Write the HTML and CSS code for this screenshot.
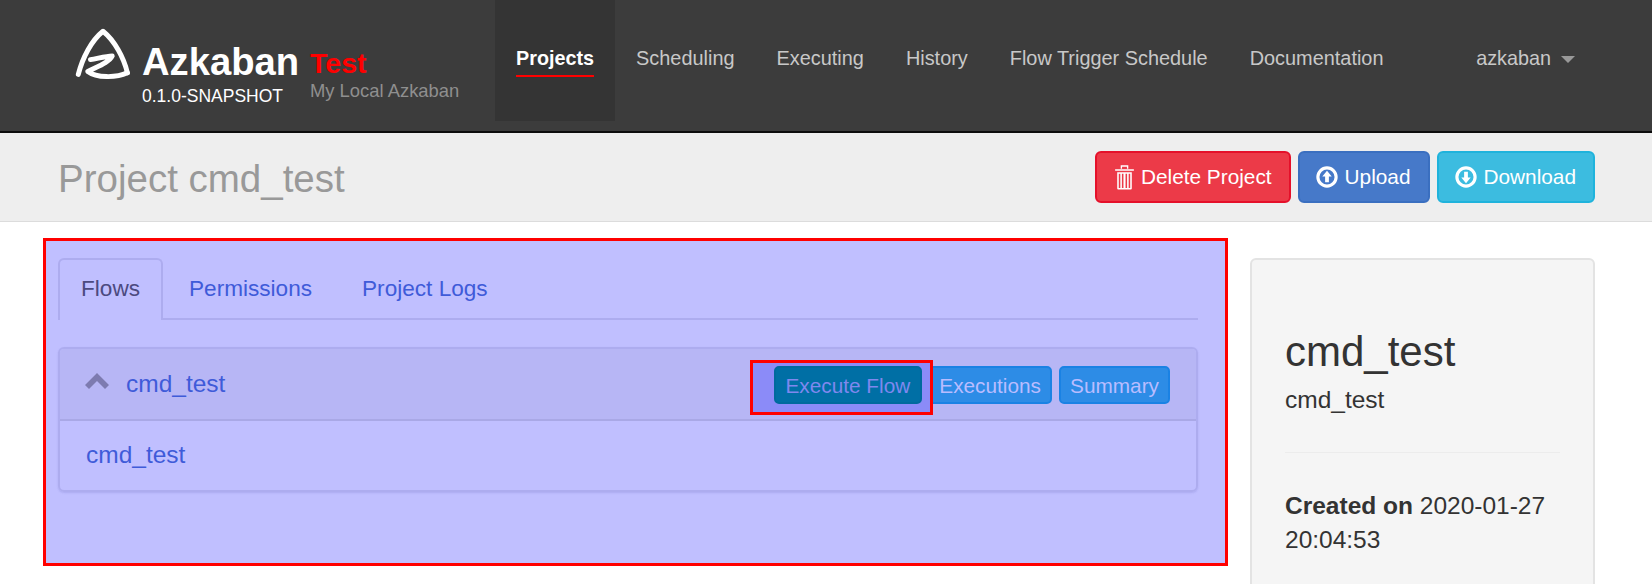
FILE: index.html
```html
<!DOCTYPE html>
<html lang="en">
<head>
<meta charset="utf-8">
<title>Azkaban - Project cmd_test</title>
<link rel="stylesheet" href="styles.css">
</head>
<body>
<div class="page">
  <nav class="navbar">
    <svg class="logo" viewBox="45 40 170 170" aria-hidden="true">
      <defs><filter id="soft" x="-10%" y="-10%" width="120%" height="120%"><feGaussianBlur stdDeviation="2.400"/></filter></defs>
      <g class="logo-strokes" filter="url(#soft)">
        <path d="M55 181C68 130 95 78 130 50C165 78 193 130 204 176"/>
        <path d="M92 136C112 133 138 126 158 125C148 146 110 158 84 172C110 192 170 192 204 176"/>
      </g>
    </svg>
    <div class="brand">
      <div class="brand-name">Azkaban</div>
      <div class="brand-version">0.1.0-SNAPSHOT</div>
    </div>
    <div class="env">
      <div class="env-name">Test</div>
      <div class="env-desc">My Local Azkaban</div>
    </div>
    <ul class="menu">
      <li class="menu-item active"><a href="#"><span>Projects</span></a></li>
      <li class="menu-item"><a href="#"><span>Scheduling</span></a></li>
      <li class="menu-item"><a href="#"><span>Executing</span></a></li>
      <li class="menu-item"><a href="#"><span>History</span></a></li>
      <li class="menu-item"><a href="#"><span>Flow Trigger Schedule</span></a></li>
      <li class="menu-item"><a href="#"><span>Documentation</span></a></li>
    </ul>
    <div class="user">azkaban<i class="caret"></i></div>
  </nav>

  <header class="page-header">
    <h1>Project cmd_test</h1>
    <div class="actions">
      <a class="btn btn-danger" href="#">
        <svg class="ico-trash" viewBox="0 0 18 24" aria-hidden="true">
          <path d="M0 4h18v1.500H0zM2 7h14v15.500a1 1 0 0 1-1 1H3a1 1 0 0 1-1-1zM3.500 8.500v13.500H5V8.500zM6.500 8.500v13.500H8V8.500zM10 8.500v13.500h1.500V8.500zM13 8.500v13.500h1.500V8.500z" fill-rule="evenodd"/>
          <path class="lid" d="M6 3.500V1h6v2.500"/>
        </svg>Delete Project</a>
      <a class="btn btn-primary" href="#">
        <svg class="ico-circle" viewBox="0 0 21 21" aria-hidden="true"><circle class="ring" cx="10.500" cy="10.500" r="8.700"/><path d="M10.500 4.600L15 10h-2.700v5.500H8.700V10H6z"/></svg>Upload</a>
      <a class="btn btn-info" href="#">
        <svg class="ico-circle" viewBox="0 0 21 21" aria-hidden="true"><circle class="ring" cx="10.500" cy="10.500" r="8.700"/><path d="M10.500 16.400L15 11h-2.700V5.500H8.700V11H6z"/></svg>Download</a>
    </div>
  </header>

  <main class="content">
    <section class="marked">
      <ul class="tabs">
        <li class="tab active"><a href="#">Flows</a></li>
        <li class="tab"><a href="#">Permissions</a></li>
        <li class="tab"><a href="#">Project Logs</a></li>
      </ul>
      <div class="panel">
        <div class="panel-heading">
          <svg class="chevron" viewBox="0 0 24 16" aria-hidden="true"><path d="M12 0L24 12l-4 4-8-8-8 8-4-4z"/></svg>
          <a class="flow-link" href="#">cmd_test</a>
          <div class="flow-actions">
            <span class="mark-wrap"><a class="fbtn fbtn-execute" href="#">Execute Flow</a></span>
            <a class="fbtn" href="#">Executions</a>
            <a class="fbtn" href="#">Summary</a>
          </div>
        </div>
        <div class="panel-body"><a href="#">cmd_test</a></div>
      </div>
    </section>
    <aside class="well">
      <h3>cmd_test</h3>
      <p class="sub">cmd_test</p>
      <hr>
      <p class="meta"><strong>Created on</strong> 2020-01-27 20:04:53</p>
    </aside>
  </main>
</div>
</body>
</html>
```
FILE: styles.css
```css
* { box-sizing: border-box; }
html, body { margin: 0; padding: 0; }
body { font-family: "Liberation Sans", Arial, sans-serif; color: #333; background: #fff; }
a { text-decoration: none; }
ul { list-style: none; margin: 0; padding: 0; }
.page { height: 584px; overflow: hidden; }

.navbar { display: flex; align-items: flex-start; height: 133px; padding-left: 75px; background: #3c3c3c; border-bottom: 2px solid #0c0c0c; }
.logo { width: 56px; height: 56px; margin-top: 28px; flex: none; }
.logo-strokes { fill: none; stroke: #fff; stroke-width: 15; stroke-linecap: round; stroke-linejoin: round; }
.brand { margin-left: 11px; padding-top: 40px; width: 168px; flex: none; }
.brand-name { font-size: 38.200px; font-weight: bold; line-height: 44px; color: #fff; }
.brand-version { font-size: 17.500px; line-height: 24px; color: #fff; }
.env { padding-top: 46px; width: 185px; flex: none; }
.env-name { font-size: 28.500px; font-weight: bold; line-height: 34px; color: #f00; }
.env-desc { font-size: 18.400px; line-height: 21px; color: #8f8f8f; }
.menu { display: flex; }
.menu-item a { display: block; height: 121px; padding: 44px 21px 0; font-size: 19.900px; line-height: 28px; color: #c8c8c8; }
.menu-item span { display: block; }
.menu-item.active a { background: #343434; color: #fff; font-weight: bold; font-size: 19.800px; }
.menu-item.active span { padding-bottom: 3px; border-bottom: 2px solid #f00; }
.user { margin-left: auto; margin-right: 77px; padding-top: 44px; font-size: 19.800px; line-height: 28px; color: #c8c8c8; white-space: nowrap; }
.caret { display: inline-block; margin-left: 10px; vertical-align: middle; border-top: 7px solid #999; border-left: 7px solid transparent; border-right: 7px solid transparent; }

.page-header { display: flex; justify-content: space-between; align-items: center; height: 89px; padding: 0 57px 0 58px; background: #eee; border-bottom: 1px solid #dcdcdc; }
.page-header h1 { margin: 4px 0 0; font-size: 38.500px; font-weight: normal; line-height: 50px; color: #999; }
.actions { display: flex; gap: 7px; }
.btn { display: flex; align-items: center; height: 52px; padding: 0 17px; border: 2px solid; border-radius: 6px; font-size: 20.800px; color: #fff; white-space: nowrap; }
.btn svg { fill: #fff; flex: none; margin-right: 7px; }
.btn .ico-trash { margin: 0 7px 0 1px; }
.btn-danger { background: #ec3a48; border-color: #e5102a; }
.btn-primary { background: #4679c9; border-color: #3a6fc0; padding-left: 16px; }
.btn-info { background: #3cbce0; border-color: #1fb3dc; padding-left: 16px; }
.ico-trash { width: 19px; height: 25px; }
.ico-trash .lid { fill: none; stroke: #fff; stroke-width: 1.300; }
.ico-circle { width: 22px; height: 22px; }
.ico-circle .ring { fill: none; stroke: #fff; stroke-width: 3; }

.content { display: flex; align-items: flex-start; gap: 22px; padding: 16px 57px 0 43px; }
.marked { width: 1185px; height: 328px; flex: none; padding: 17px 27px 0 12px; background: #c0bfff; border: 3px solid #f00; }
.tabs { display: flex; height: 62px; border-bottom: 2px solid #adacef; }
.tab { margin-right: 2px; }
.tab a { display: block; height: 62px; padding: 0 22px; font-size: 22.600px; line-height: 58px; color: #3f5bd9; border: 2px solid transparent; border-bottom: 0; border-radius: 6px 6px 0 0; }
.tab.active a { color: #4c4a80; background: #c0bfff; border-color: #adacef; padding: 0 21px; }

.panel { margin-top: 27px; border: 2px solid #adacef; border-radius: 6px; box-shadow: 0 1px 2px rgba(60, 60, 160, 0.15); }
.panel-heading { display: flex; align-items: center; height: 72px; padding: 0 26px 0 25px; background: #b7b6f5; border-bottom: 2px solid #a9a8e6; border-radius: 4px 4px 0 0; }
.chevron { width: 24px; height: 16px; fill: #7d7bb0; flex: none; margin-right: 17px; margin-top: -6px; }
.flow-link { font-size: 24.500px; color: #3f5bd9; }
.flow-actions { display: flex; gap: 7px; margin-left: auto; margin-top: 2px; }
.fbtn { display: block; height: 38px; padding: 0 9px; background: #2d8ce6; border: 2px solid #1a82e4; border-radius: 5px; font-size: 20.800px; line-height: 35px; color: #b9bcff; white-space: nowrap; }
.mark-wrap { position: relative; z-index: 1; margin-right: -1px; }
.mark-wrap::before { content: ""; position: absolute; z-index: -1; top: -6px; bottom: -11px; left: -24px; right: -11px; background: #8b8bf8; border: 3px solid #f00; }
.fbtn-execute { background: #006fa5; border-color: #006a9e; color: #7f88ee; padding: 0 10px 0 9px; }
.panel-body { height: 69px; padding: 0 26px; font-size: 24.500px; line-height: 67px; }
.panel-body a { color: #3f5bd9; }

.well { width: 345px; height: 500px; flex: none; margin-top: 20px; padding: 69px 33px 0; background: #f5f5f5; border: 2px solid #e3e3e3; border-radius: 6px; }
.well h3 { margin: 0; font-size: 42px; font-weight: normal; line-height: 46px; }
.sub { margin: 8px 0 0; font-size: 24.500px; line-height: 34px; }
.well hr { margin: 35px 0 36px; border: 0; border-top: 1px solid #ececec; }
.meta { margin: 0; font-size: 24.500px; line-height: 34.300px; }
```
